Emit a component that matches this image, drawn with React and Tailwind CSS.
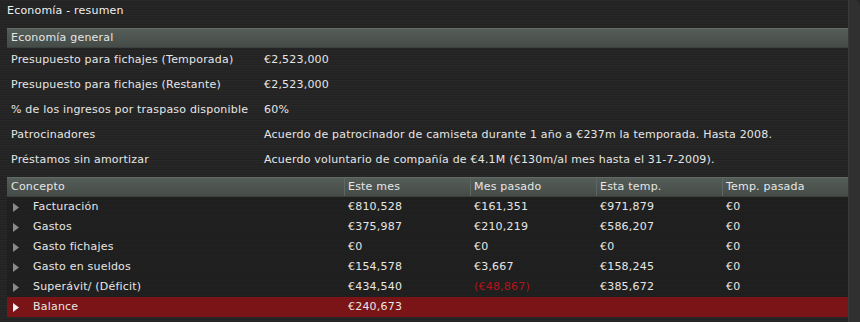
import React from 'react';

const general = [
  ['Presupuesto para fichajes (Temporada)', '€2,523,000'],
  ['Presupuesto para fichajes (Restante)', '€2,523,000'],
  ['% de los ingresos por traspaso disponible', '60%'],
  ['Patrocinadores', 'Acuerdo de patrocinador de camiseta durante 1 año a €237m la temporada. Hasta 2008.'],
  ['Préstamos sin amortizar', 'Acuerdo voluntario de compañía de €4.1M (€130m/al mes hasta el 31-7-2009).'],
];

const rows = [
  { name: 'Facturación', v: ['€810,528', '€161,351', '€971,879', '€0'] },
  { name: 'Gastos', v: ['€375,987', '€210,219', '€586,207', '€0'] },
  { name: 'Gasto fichajes', v: ['€0', '€0', '€0', '€0'] },
  { name: 'Gasto en sueldos', v: ['€154,578', '€3,667', '€158,245', '€0'] },
  { name: 'Superávit/ (Déficit)', v: ['€434,540', '(€48,867)', '€385,672', '€0'] },
];

const cols = ['Este mes', 'Mes pasado', 'Esta temp.', 'Temp. pasada'];

function Arrow({ bright }) {
  return (
    <svg width="6" height="9" viewBox="0 0 6 9" className="shrink-0">
      <path d="M0 0 L6 4.5 L0 9 Z" fill={bright ? '#f2f2f2' : '#8a8a8a'} />
    </svg>
  );
}

export default function App() {
  return (
    <div
      className="w-[860px] h-[322px] overflow-hidden text-[11px] tracking-[0.2px] text-[#e6e6e6] bg-[#262626] bg-[repeating-linear-gradient(180deg,#2a2a2a_0px,#222_2px,#282828_3px,#1f1f1f_5px)] flex"
      style={{ fontFamily: '"DejaVu Sans", sans-serif' }}
    >
      <div className="flex-1 flex flex-col pl-[7px]">
        <div className="h-[21px] flex items-center pt-[1px] text-[#f0f0f0]">Economía - resumen</div>
        <div className="mt-[7px] flex flex-col">
          <div className="h-[20px] flex items-center px-[4px] bg-gradient-to-b from-[#555d59] to-[#454c48] border-t border-[#636b67] border-b border-b-[#3a403d]">
            Economía general
          </div>
          {general.map(([k, v]) => (
            <div key={k} className="h-[25px] flex items-center px-[4px]">
              <div className="w-[253px]">{k}</div>
              <div>{v}</div>
            </div>
          ))}
        </div>
        <div className="mt-[4px] flex flex-col">
          <div className="h-[20px] flex items-center bg-gradient-to-b from-[#555d59] to-[#454c48] border-t border-[#636b67] border-b border-b-[#3a403d]">
            <div className="w-[337px] pl-[4px]">Concepto</div>
            {cols.map((c) => (
              <div key={c} className="w-[126px] h-full flex items-center pl-[3px] border-l border-[#5f6763]">{c}</div>
            ))}
          </div>
          {rows.map((r) => (
            <div key={r.name} className="h-[20px] flex items-center bg-[#1c1c1c]/60">
              <div className="w-[337px] pl-[6px] flex items-center gap-[14px]">
                <Arrow />
                <span>{r.name}</span>
              </div>
              {r.v.map((x, i) => (
                <div key={i} className={`w-[126px] pl-[4px] ${x.startsWith('(') ? 'text-[#b3151a]' : ''}`}>{x}</div>
              ))}
            </div>
          ))}
          <div className="h-[20px] flex items-center bg-[#7a1416]">
            <div className="w-[337px] pl-[6px] flex items-center gap-[14px]">
              <Arrow bright />
              <span>Balance</span>
            </div>
            <div className="pl-[4px]">€240,673</div>
          </div>
        </div>
      </div>
      <div className="w-[12px] bg-[#303030] border-l border-[#3a3a3a] rounded-tr-[6px]" />
    </div>
  );
}
